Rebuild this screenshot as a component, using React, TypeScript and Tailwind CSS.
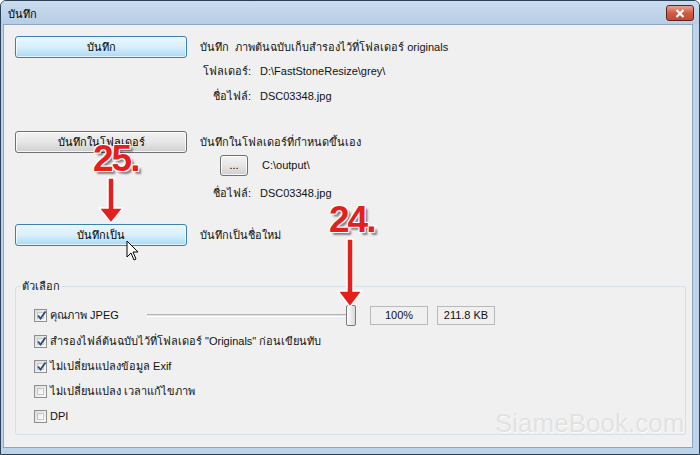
import React from 'react';

const Check: React.FC<{ checked?: boolean }> = ({ checked }) => (
  <div className="w-[13px] h-[13px] shrink-0 border border-[#8e8f8f] bg-linear-to-br from-[#dcdcdc] to-[#fbfbfb] p-[2px]">
    <div className="w-full h-full bg-linear-to-br from-[#e8e8e8] to-[#ffffff] border border-[#c8c8c8] relative">
      {checked && (
        <svg className="absolute -left-[2px] -top-[3px]" width="11" height="11" viewBox="0 0 11 11">
          <path d="M2 5.5 L4.5 8.5 L9.5 1.5" fill="none" stroke="#2a4a7c" strokeWidth="1.8" />
        </svg>
      )}
    </div>
  </div>
);

const BlueBtn: React.FC<{ label: string }> = ({ label }) => (
  <div className="w-[172px] h-[22px] shrink-0 rounded-[3px] border border-[#3c7fb1] bg-linear-to-b from-[#eaf6fd] via-[#d9f0fc] to-[#a7d9f5] shadow-[inset_0_0_0_1px_rgba(255,255,255,0.7)] flex items-center justify-center text-black">
    {label}
  </div>
);

const GrayBtn: React.FC<{ label: string; className?: string }> = ({ label, className }) => (
  <div className={`rounded-[3px] border border-[#707070] bg-linear-to-b from-[#f2f2f2] via-[#e6e6e6] to-[#cfcfcf] shadow-[inset_0_0_0_1px_rgba(255,255,255,0.8)] flex items-center justify-center text-black ${className ?? ''}`}>
    {label}
  </div>
);

const Opt: React.FC<{ checked?: boolean; label: string }> = ({ checked, label }) => (
  <div className="h-[25px] flex items-center gap-[3px]">
    <Check checked={checked} />
    <span>{label}</span>
  </div>
);

const numStyle =
  "absolute font-['Liberation_Sans',Arial,sans-serif] font-bold text-[37px] leading-none tracking-[-2px] text-[#e3201b] [text-shadow:1px_1px_0_#fff,-1px_-1px_0_#fff,1px_-1px_0_#fff,-1px_1px_0_#fff,3px_3px_2px_rgba(0,0,0,0.45)]";

export default function App() {
  return (
    <div className="w-[700px] h-[455px] relative flex flex-col border border-[#2b3f55] rounded-t-[6px] bg-[#bcd3ea] overflow-hidden font-['Liberation_Sans','Noto_Sans',sans-serif] text-[11px] text-[#111]">
      {/* Title bar */}
      <div className="h-[23px] shrink-0 flex items-start bg-linear-to-b from-[#cadcef] to-[#b7cde6]">
        <span className="pl-[7px] pt-[5px] text-black">บันทึก</span>
        <div className="ml-auto mr-[5px] mt-[4px] w-[28px] h-[16px] rounded-[3px] border border-[#5e241c] bg-linear-to-b from-[#e8a595] via-[#cf5a45] to-[#c04a38] flex items-center justify-center">
          <svg width="10" height="9" viewBox="0 0 10 9">
            <path d="M1.5 1 L8.5 8 M8.5 1 L1.5 8" stroke="#fff" strokeWidth="2.2" />
          </svg>
        </div>
      </div>

      {/* Client area */}
      <div className="flex-1 ml-[2px] mr-[6px] mb-[6px] border border-[#8ea6bf] bg-[#f0f0f0] flex flex-col pl-[11px] pr-[6px] pt-[11px]">
        <div className="h-[22px] flex items-center">
          <BlueBtn label="บันทึก" />
          <span className="ml-[13px]">บันทึก&nbsp;&nbsp;ภาพต้นฉบับเก็บสำรองไว้ที่โฟลเดอร์ originals</span>
        </div>
        <div className="h-[24px] mt-[1px] flex items-center pl-[185px]">
          <span className="w-[51px] text-right">โฟลเดอร์:</span>
          <span className="ml-[9px]">D:\FastStoneResize\grey\</span>
        </div>
        <div className="h-[24px] mt-[1px] flex items-center pl-[185px]">
          <span className="w-[51px] text-right">ชื่อไฟล์:</span>
          <span className="ml-[9px]">DSC03348.jpg</span>
        </div>

        <div className="h-[22px] mt-[23px] flex items-center">
          <GrayBtn label="บันทึกในโฟลเดอร์" className="w-[172px] h-[22px] shrink-0" />
          <span className="ml-[13px]">บันทึกในโฟลเดอร์ที่กำหนดขึ้นเอง</span>
        </div>
        <div className="h-[22px] mt-[1px] flex items-center pl-[205px]">
          <GrayBtn label="..." className="w-[28px] h-[21px]" />
          <span className="ml-[14px]">C:\output\</span>
        </div>
        <div className="h-[24px] mt-[5px] flex items-center pl-[185px]">
          <span className="w-[51px] text-right">ชื่อไฟล์:</span>
          <span className="ml-[9px]">DSC03348.jpg</span>
        </div>

        <div className="h-[22px] mt-[19px] flex items-center">
          <BlueBtn label="บันทึกเป็น" />
          <span className="ml-[13px]">บันทึกเป็นชื่อใหม่</span>
        </div>

        <fieldset className="mt-[33px] border border-[#d5dfe5] rounded-[3px] px-[5px] pb-[5px]">
          <legend className="px-[1px] leading-[14px]">ตัวเลือก</legend>
          <div className="mt-[9px] pl-[13px] flex flex-col">
            <div className="h-[27px] flex items-center">
              <div className="w-[113px] shrink-0 flex items-center gap-[3px]">
                <Check checked />
                <span>คุณภาพ JPEG</span>
              </div>
              <div className="w-[209px] h-[22px] flex items-center">
                <div className="flex-1 h-[3px] border-t border-[#b4b4b4] border-b border-b-[#ffffff] bg-[#e3e3e3]" />
                <div className="w-[10px] h-[21px] rounded-[2px] border border-[#7a7a7a] bg-linear-to-r from-[#fdfdfd] to-[#d9d9d9]" />
              </div>
              <div className="ml-[14px] w-[58px] h-[19px] border border-[#b9b9b9] flex items-center justify-center">100%</div>
              <div className="ml-[9px] w-[58px] h-[19px] border border-[#b9b9b9] flex items-center justify-center">211.8 KB</div>
            </div>
            <Opt checked label={'สำรองไฟล์ต้นฉบับไว้ที่โฟลเดอร์ "Originals" ก่อนเขียนทับ'} />
            <Opt checked label="ไม่เปลี่ยนแปลงข้อมูล Exif" />
            <Opt label="ไม่เปลี่ยนแปลง เวลาแก้ไขภาพ" />
            <Opt label="DPI" />
          </div>
        </fieldset>
      </div>

      {/* Watermark */}
      <div className="absolute left-[494px] top-[409px] font-['Liberation_Sans',Arial,sans-serif] text-[26px] leading-none text-[#e2e2e2] [text-shadow:1px_1px_0_#fafafa] pointer-events-none">
        SiameBook.com
      </div>

      {/* Annotations */}
      <div className={`${numStyle} left-[92px] top-[139px]`}>25.</div>
      <svg className="absolute left-[96px] top-[175px]" width="28" height="50" viewBox="0 0 28 50">
        <path d="M11 2 H17 V32 H26 L14 47 L2 32 H11 Z" fill="#e3201b" stroke="#fff" strokeWidth="1.5" />
      </svg>

      <div className={`${numStyle} left-[328px] top-[200px]`}>24.</div>
      <svg className="absolute left-[336px] top-[236px]" width="26" height="72" viewBox="0 0 26 72">
        <path d="M10 2 H16 V54 H25 L13 70 L1 54 H10 Z" fill="#e3201b" stroke="#fff" strokeWidth="1.5" />
      </svg>

      {/* Mouse cursor */}
      <svg className="absolute left-[125px] top-[239px]" width="13" height="21" viewBox="0 0 13 21">
        <path d="M1 1 L1 17 L5 13 L8 20 L10 19 L7 12 L12 12 Z" fill="#fff" stroke="#000" strokeWidth="1" />
      </svg>
    </div>
  );
}
